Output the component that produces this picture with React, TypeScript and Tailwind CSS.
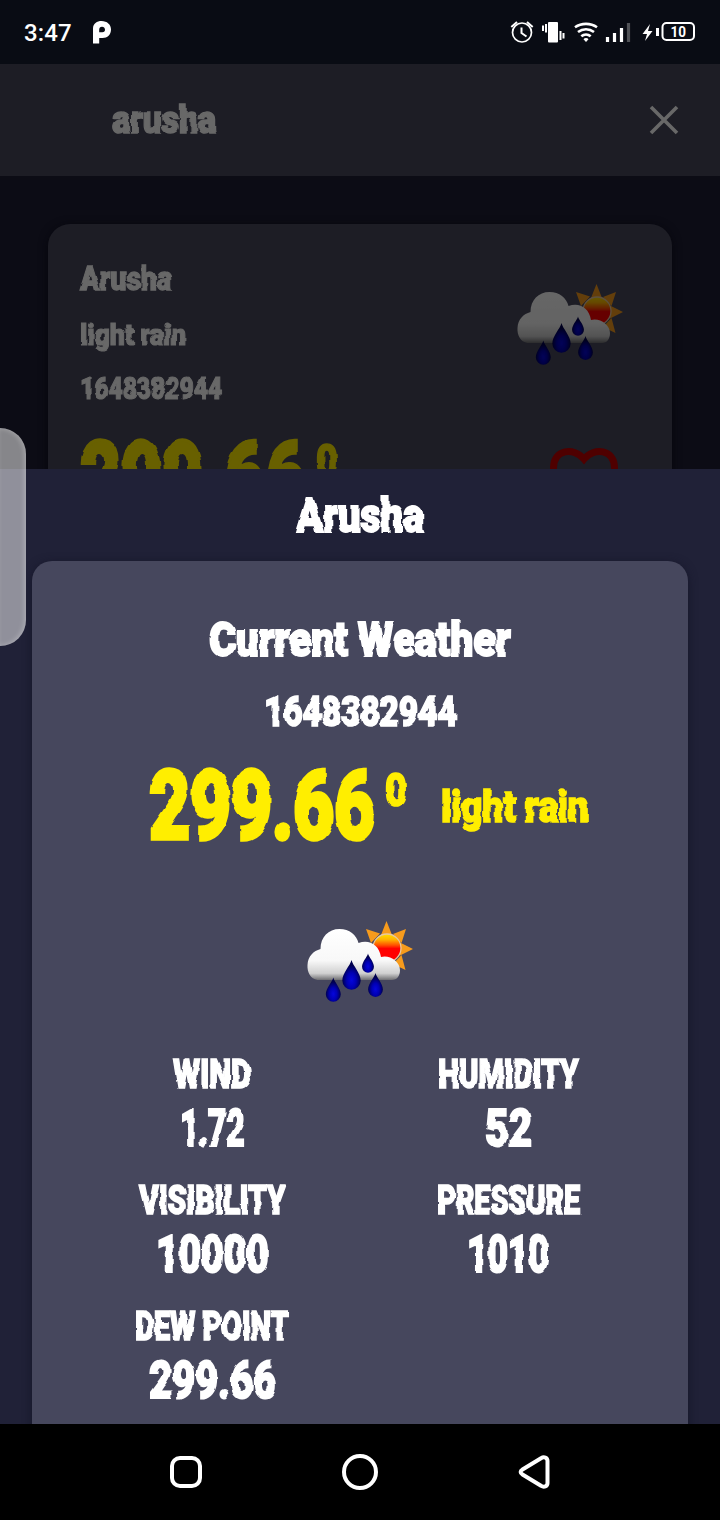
import { useLayoutEffect, useRef, useState } from "react";
import clsx from "clsx";

type FitProps = { text: string; width: number; className: string };

/** Display lettering condensed horizontally to an exact width. */
function Fit({ text, width, className }: FitProps) {
  const ref = useRef<HTMLSpanElement>(null);
  const [scale, setScale] = useState(0.75);
  useLayoutEffect(() => {
    if (ref.current) setScale(width / ref.current.offsetWidth);
  }, [text, width]);
  return (
    <span
      className={clsx(
        "block shrink-0 whitespace-nowrap font-['Roboto','Liberation_Sans',sans-serif] font-black [filter:url(#rough)]",
        className,
      )}
      style={{ width }}
    >
      <span
        ref={ref}
        className="inline-block origin-left pr-[0.01em] tracking-[-0.005em] [-webkit-text-stroke:0.038em_currentColor]"
        style={{ transform: `scaleX(${scale})` }}
      >
        {text}
      </span>
    </span>
  );
}

function RoughFilter() {
  return (
    <svg className="absolute size-0" aria-hidden="true">
      <filter id="rough" x="-5%" y="-5%" width="110%" height="110%" colorInterpolationFilters="sRGB">
        <feTurbulence type="fractalNoise" baseFrequency="0.05 0.12" numOctaves="1" seed="4" />
        <feColorMatrix values="1 0 0 0 0  0 0.4 0 0 0.3  0 0 1 0 0  0 0 0 0 1" result="n" />
        <feDisplacementMap in="SourceGraphic" in2="n" scale="4.5" xChannelSelector="R" yChannelSelector="G" />
      </filter>
    </svg>
  );
}

function Drop({ x, y, s }: { x: number; y: number; s: number }) {
  return (
    <path
      transform={`translate(${x} ${y}) scale(${s})`}
      d="M0 0C1 5 8.500 12 8.500 19A8.500 8.500 0 0 1-8.500 19C-8.500 12-1 5 0 0Z"
      fill="url(#drop)"
    />
  );
}

function RainIcon({ className }: { className?: string }) {
  return (
    <svg viewBox="25 20 110 84" className={clsx("h-[84px] w-[110px] shrink-0", className)}>
      <defs>
        <radialGradient id="drop" cx="0.5" cy="0.68" r="0.5">
          <stop offset="0" stopColor="#0606dc" />
          <stop offset="0.5" stopColor="#0000b4" />
          <stop offset="1" stopColor="#00004e" />
        </radialGradient>
        <linearGradient id="sun" x1="0" y1="0" x2="0" y2="1">
          <stop offset="0" stopColor="#ffe000" />
          <stop offset="0.2" stopColor="#ffb400" />
          <stop offset="0.4" stopColor="#ff5000" />
          <stop offset="0.52" stopColor="#ff0000" />
        </linearGradient>
        <linearGradient id="cloud" gradientUnits="userSpaceOnUse" x1="0" y1="30" x2="0" y2="81">
          <stop offset="0" stopColor="#fff" />
          <stop offset="0.6" stopColor="#f8f8f8" />
          <stop offset="0.85" stopColor="#d0d0d0" />
          <stop offset="1" stopColor="#606064" />
        </linearGradient>
        <filter id="soft" x="-10%" y="-10%" width="120%" height="120%" colorInterpolationFilters="sRGB">
          <feGaussianBlur stdDeviation="0.7" />
        </filter>
      </defs>
      <g filter="url(#soft)">
        <path
          d="M106.500 21L112 35L101 35ZM126 29L121.500 43L113 34ZM133 49L120 55.500L120 42.500ZM125.500 70L113 64L121.500 55ZM86 29L100 33.500L91 43Z"
          fill="#f79b1c"
        />
        <circle cx="107" cy="48" r="14" fill="url(#sun)" stroke="#e8c9a0" strokeWidth="1.300" />
        <path
          d="M37.500 80C30.500 79 27 72 27.500 65C28 56 33.500 51 40.500 49C40.500 37 48.500 29 59.500 29C69.500 29 76.500 35 78.500 43C88.500 39 99 44 101 57C109 54.500 120 61 120 70C120 76 117 80 112 80Z"
          fill="url(#cloud)"
        />
        <Drop x={71.500} y={60} s={1.080} />
        <Drop x={88} y={53.500} s={0.700} />
        <Drop x={53.300} y={77.500} s={0.880} />
        <Drop x={95.500} y={73} s={0.870} />
      </g>
    </svg>
  );
}

function StatusBar() {
  return (
    <div className="flex h-16 shrink-0 items-center bg-[#090c14] pl-6 pr-[25px] text-white">
      <span className="w-[68px] pt-0.5 font-['Roboto',sans-serif] text-[24px] font-medium leading-none tracking-[0.1px]">3:47</span>
      <svg viewBox="0 0 20 24" className="h-6 w-5">
        <path
          fillRule="evenodd"
          fill="#fff"
          d="M1 23.500V8.500C1 3.500 5 1 9.500 1C15 1 19 4.500 19 9.500C19 14.500 15.500 18 10.500 18H7.200V23.500ZM7.200 12.300H10.300C12.300 12.300 13 11 13 9.700C13 7.800 11.700 6.800 10 6.800C8.200 6.800 7.200 8 7.200 9.700Z"
        />
      </svg>
      <svg viewBox="510 18 185 28" className="ml-auto h-7 w-[185px]" fill="none" stroke="#fff">
        <circle cx="522" cy="32.500" r="9.500" strokeWidth="1.700" />
        <path d="M521.500 27.500V33L526.500 36.500" strokeWidth="2" />
        <path d="M511.300 27L517 22M532.700 27L527 22" strokeWidth="2" />
        <rect x="548" y="22" width="10" height="20.500" rx="1" fill="#fff" stroke="none" />
        <path d="M543 25.500V31M546 24V32.500M560.500 31V40M563.500 33V38.500" strokeWidth="2" />
        <path d="M575 27.300C581.500 22.700 590.500 22.700 597 27.300M578 32C582.800 28.300 589.200 28.300 594 32M581.300 36.300C584 34 588 34 590.700 36.300" strokeWidth="2.600" />
        <path d="M583.500 39.300A3 3 0 0 1 588.500 39.300L586 42Z" fill="#fff" stroke="none" />
        <path d="M607.500 37V42M614.500 33V42M621.500 28V42" strokeWidth="3.200" />
        <path d="M628.500 23V42" strokeWidth="3.200" stroke="#505257" />
        <path d="M650 24L642.500 34H647L645 41L652.500 31H648Z" fill="#fff" stroke="none" />
        <path d="M657.500 28V36" strokeWidth="3" />
        <rect x="662.500" y="23" width="31.500" height="17" rx="4" strokeWidth="2" />
        <text
          x="670.500"
          y="36.800"
          textLength="15.500"
          lengthAdjust="spacingAndGlyphs"
          fill="#fff"
          stroke="none"
          className="font-['Roboto',sans-serif] text-[15.5px] font-bold"
        >
          10
        </text>
      </svg>
    </div>
  );
}

function SearchHeader() {
  return (
    <div className="flex h-28 shrink-0 items-center justify-between bg-[#1d1d25] pl-28 pr-[41px] text-[#686868]">
      <Fit text="arusha" width={104} className="text-[39px] leading-[56px]" />
      <svg viewBox="0 0 30 30" className="size-[30px]" stroke="currentColor" strokeWidth="3.600">
        <path d="M2 2L28 28M28 2L2 28" />
      </svg>
    </div>
  );
}

function Temperature() {
  return (
    <div className="flex items-start gap-[9px]">
      <Fit text="299.66" width={227} className="h-[100px] text-[97px] leading-[102px]" />
      <Fit text="0" width={22} className="mt-[10px] h-[50px] text-[46px] leading-[50px]" />
    </div>
  );
}

function ResultCard() {
  return (
    <div className="h-[293px] shrink-0 overflow-hidden bg-[#0c0c15] px-12 pt-12">
      <div className="flex h-[400px] justify-between rounded-[22px] bg-[#1d1d25] pl-8 pr-[47px] text-[#686868] shadow-[0_2px_10px_#06060d]">
        <div className="flex flex-col pt-[33px]">
          <Fit text="Arusha" width={92} className="h-[42px] text-[34px] leading-[42px]" />
          <Fit text="light rain" width={106} className="mt-4 h-10 text-[30px] leading-10" />
          <Fit text="1648382944" width={142} className="mt-[14px] h-10 text-[31px] leading-10" />
          <div className="mt-[17px] text-[#686000]">
            <Temperature />
          </div>
        </div>
        <div className="flex flex-col items-end pt-[59px]">
          <RainIcon className="brightness-40" />
          <svg viewBox="0 0 68 62" className="mr-[7px] mt-[80px] h-[62px] w-[68px]" fill="none" stroke="#4f0000" strokeWidth="7">
            <path d="M34 12C24 0 3.500 2 3.500 21C3.500 38 24 49 34 58C44 49 64.500 38 64.500 21C64.500 2 44 0 34 12Z" />
          </svg>
        </div>
      </div>
    </div>
  );
}

const metrics = [
  { label: "WIND", labelWidth: 78, value: "1.72", valueWidth: 65 },
  { label: "HUMIDITY", labelWidth: 141, value: "52", valueWidth: 47 },
  { label: "VISIBILITY", labelWidth: 147, value: "10000", valueWidth: 113 },
  { label: "PRESSURE", labelWidth: 143, value: "1010", valueWidth: 82 },
  { label: "DEW POINT", labelWidth: 154, value: "299.66", valueWidth: 127 },
];

function WeatherSheet() {
  return (
    <div className="flex h-[955px] shrink-0 flex-col items-center overflow-hidden bg-[#202137] text-white">
      <Fit text="Arusha" width={128} className="h-[92px] text-[49px] leading-[93px]" />
      <div className="flex h-[900px] w-[656px] shrink-0 flex-col items-center rounded-t-[20px] bg-[#46475d] pt-[48px] shadow-[0_2px_10px_#151629]">
        <Fit text="Current Weather" width={302} className="h-[60px] text-[49px] leading-[61px]" />
        <Fit text="1648382944" width={193} className="mt-[18px] h-[50px] text-[42px] leading-[50px]" />
        <div className="ml-[18px] mt-[18px] flex h-[100px] w-[440px] gap-[34px] text-[#ffee00]">
          <Temperature />
          <Fit text="light rain" width={148} className="mt-[22px] h-[60px] text-[44px] leading-[60px]" />
        </div>
        <RainIcon className="mt-[65px]" />
        <div className="mt-[40px] grid w-[592px] grid-cols-2">
          {metrics.map((m) => (
            <div key={m.label} className="flex h-[126px] flex-col items-center pt-[5px]">
              <Fit text={m.label} width={m.labelWidth} className="h-[50px] text-[40px] leading-[51px]" />
              <Fit text={m.value} width={m.valueWidth} className="h-[58px] text-[52px] leading-[60px]" />
            </div>
          ))}
        </div>
      </div>
    </div>
  );
}

function NavBar() {
  return (
    <div className="flex h-24 shrink-0 items-center justify-between bg-black px-[166px]">
      <svg viewBox="0 0 40 40" className="size-10" fill="none" stroke="#fff" strokeWidth="4">
        <rect x="6" y="6" width="28" height="28" rx="8" />
      </svg>
      <svg viewBox="0 0 40 40" className="size-10" fill="none" stroke="#fff" strokeWidth="4">
        <circle cx="20" cy="20" r="16" />
      </svg>
      <svg viewBox="0 0 40 40" className="size-10" fill="none" stroke="#fff" strokeWidth="4">
        <path d="M8.500 17.500L27 6.200C30 4.500 33.500 5.500 33.500 9V31C33.500 34.500 30 35.500 27 33.800L8.500 22.500C6 21 6 19 8.500 17.500Z" />
      </svg>
    </div>
  );
}

export default function App() {
  return (
    <div className="relative flex h-[1520px] w-[720px] flex-col overflow-hidden bg-black">
      <RoughFilter />
      <StatusBar />
      <SearchHeader />
      <ResultCard />
      <WeatherSheet />
      <NavBar />
      <div className="absolute left-0 top-[428px] h-[218px] w-[26px] rounded-r-[26px] bg-white/50 shadow-[inset_-2px_0_5px_rgba(255,255,255,0.25)]" />
    </div>
  );
}
